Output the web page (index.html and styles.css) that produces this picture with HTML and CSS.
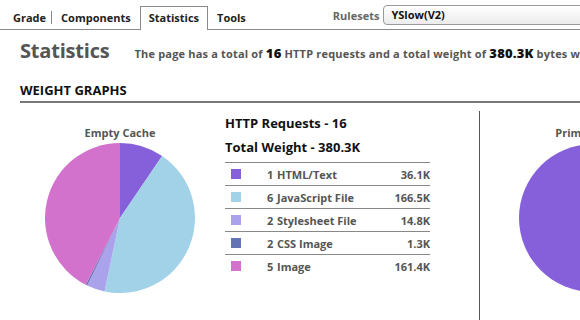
FILE: index.html
```html
<!DOCTYPE html>
<html>
<head>
<meta charset="utf-8">
<link rel="stylesheet" href="styles.css">
</head>
<body>
<div class="topbar">
  <ul class="tabs">
    <li class="tab first">Grade</li>
    <li class="divider"></li>
    <li class="tab">Components</li>
    <li class="tab active">Statistics</li>
    <li class="tab">Tools</li>
  </ul>
  <div class="rulesets">
    <span class="rs-label">Rulesets</span>
    <div class="select">YSlow(V2)</div>
  </div>
</div>
<div class="content">
  <div class="title-row">
    <h1 class="title">Statistics</h1>
    <p class="summary">The page has a total of <b>16</b> HTTP requests and a total weight of <b>380.3K</b> bytes with empty cache</p>
  </div>
  <h2 class="section">WEIGHT GRAPHS</h2>
  <div class="graphs">
    <div class="pie-col">
      <div class="pie-title">Empty Cache</div>
      <svg class="pie" width="150" height="150" viewBox="-75 -75 150 150">
        <path d="M0 0 L0 -75 A75 75 0 0 1 42.14 -62.04 Z" fill="#8660DA"/>
        <path d="M0 0 L42.14 -62.04 A75 75 0 0 1 -15.44 73.40 Z" fill="#A2D2E8"/>
        <path d="M0 0 L-15.44 73.40 A75 75 0 0 1 -32.76 67.47 Z" fill="#AAA2EA"/>
        <path d="M0 0 L-32.76 67.47 A75 75 0 0 1 -34.20 66.75 Z" fill="#6272B2"/>
        <path d="M0 0 L-34.20 66.75 A75 75 0 0 1 0 -75 Z" fill="#D272CC"/>
      </svg>
    </div>
    <div class="legend">
      <div class="legend-head">HTTP Requests - 16</div>
      <div class="legend-head">Total Weight - 380.3K</div>
      <div class="rows">
        <div class="row"><span class="swatch c-html"></span><span class="count">1</span><span class="name">HTML/Text</span><span class="size">36.1K</span></div>
        <div class="row"><span class="swatch c-js"></span><span class="count">6</span><span class="name">JavaScript File</span><span class="size">166.5K</span></div>
        <div class="row"><span class="swatch c-css"></span><span class="count">2</span><span class="name">Stylesheet File</span><span class="size">14.8K</span></div>
        <div class="row"><span class="swatch c-cssimg"></span><span class="count">2</span><span class="name">CSS Image</span><span class="size">1.3K</span></div>
        <div class="row"><span class="swatch c-img"></span><span class="count">5</span><span class="name">Image</span><span class="size">161.4K</span></div>
      </div>
    </div>
    <div class="pie-col primed">
      <div class="pie-title">Primed Cache</div>
      <svg class="pie" width="150" height="150" viewBox="-75 -75 150 150">
        <circle cx="0" cy="0" r="74" fill="#8660DA"/>
      </svg>
    </div>
  </div>
</div>
</body>
</html>
```
FILE: styles.css
```css
html, body {
  margin: 0;
  padding: 0;
  background: #fff;
  overflow: hidden;
}
body {
  width: 580px;
  height: 320px;
  font-family: "Open Sans", "DejaVu Sans", sans-serif;
  color: #222;
}
.topbar {
  display: flex;
  align-items: flex-start;
  height: 29px;
  border-bottom: 1px solid #8a8a8a;
  white-space: nowrap;
}
.tabs {
  list-style: none;
  margin: 0;
  padding: 0 0 0 4px;
  display: flex;
  align-items: center;
  height: 29px;
  flex: none;
}
.tab {
  font-size: 11px;
  font-weight: bold;
  color: #222;
  padding: 0 8px;
  height: 23px;
  line-height: 22px;
  margin-top: 6px;
  box-sizing: border-box;
  border: 1px solid transparent;
  border-bottom: none;
}
.tab.first {
  padding-left: 8px;
  padding-right: 4px;
}
.tab.active {
  border-color: #8a8a8a;
  background: #fff;
  height: 24px;
  padding: 0 8px;
}
.divider {
  width: 1px;
  height: 13px;
  background: #888;
  margin-top: 6px;
}
.rulesets {
  margin-left: 78px;
  display: flex;
  align-items: center;
  height: 20px;
  margin-top: 5px;
  flex: none;
}
.rs-label {
  font-size: 11px;
  font-weight: bold;
  color: #666;
  margin-right: 4px;
}
.select {
  width: 240px;
  height: 20px;
  box-sizing: border-box;
  border: 1px solid #999;
  border-radius: 4px;
  background: linear-gradient(#fff, #ececec);
  font-size: 11px;
  font-weight: bold;
  color: #111;
  line-height: 18px;
  padding-left: 7px;
}
.content {
  padding-left: 20px;
}
.title-row {
  display: flex;
  align-items: baseline;
  white-space: nowrap;
  margin-top: 7px;
  height: 34px;
  overflow: hidden;
}
.title {
  margin: 0;
  font-size: 20px;
  font-weight: bold;
  color: #555;
  letter-spacing: -0.2px;
  flex: none;
}
.summary {
  margin: 0 0 0 25px;
  font-size: 11px;
  font-weight: bold;
  color: #555;
  letter-spacing: 0.18px;
}
.summary b {
  font-size: 13px;
  color: #111;
}
.section {
  margin: 10px 0 0 0;
  font-size: 13px;
  font-weight: bold;
  color: #111;
  padding-bottom: 2px;
  border-bottom: 2px solid #777;
  line-height: 18px;
}
.graphs {
  display: flex;
  margin-top: 8px;
  height: 220px;
}
.pie-col {
  width: 200px;
  flex: none;
  display: flex;
  flex-direction: column;
  align-items: center;
}
.pie-title {
  font-size: 11px;
  font-weight: bold;
  color: #555;
  margin-top: 15px;
  line-height: 14px;
  white-space: nowrap;
}
.pie {
  margin-top: 3px;
  display: block;
}
.legend {
  width: 205px;
  flex: none;
  margin-left: 5px;
}
.legend-head {
  font-size: 13px;
  font-weight: bold;
  color: #111;
  line-height: 24px;
  white-space: nowrap;
}
.rows {
  margin-top: 3px;
}
.row {
  display: flex;
  align-items: center;
  height: 23px;
  border-top: 1px solid #888;
  box-sizing: border-box;
  font-size: 11px;
  font-weight: bold;
  color: #555;
  white-space: nowrap;
}
.swatch {
  width: 10px;
  height: 10px;
  margin-left: 6px;
  flex: none;
}
.count {
  margin-left: 26px;
  width: 10px;
  flex: none;
}
.name {
  flex: 1;
}
.size {
  text-align: right;
}
.c-html { background: #8660DA; }
.c-js { background: #A2D2E8; }
.c-css { background: #AAA2EA; }
.c-cssimg { background: #6272B2; }
.c-img { background: #D272CC; }
.primed {
  margin-left: 49px;
  width: 226px;
  border-left: 1px solid #555;
}
```
